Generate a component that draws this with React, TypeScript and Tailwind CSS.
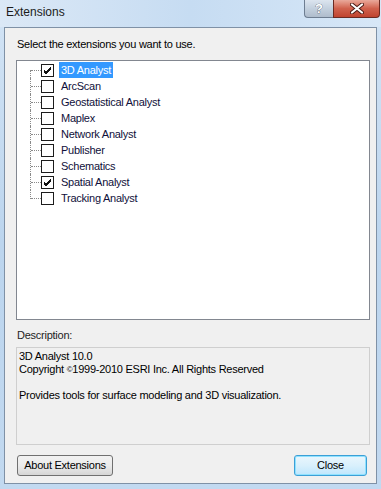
import React from 'react';

const ITEMS = [
  { name: '3D Analyst', checked: true, selected: true },
  { name: 'ArcScan', checked: false },
  { name: 'Geostatistical Analyst', checked: false },
  { name: 'Maplex', checked: false },
  { name: 'Network Analyst', checked: false },
  { name: 'Publisher', checked: false },
  { name: 'Schematics', checked: false },
  { name: 'Spatial Analyst', checked: true },
  { name: 'Tracking Analyst', checked: false },
];

function CheckBox({ checked }: { checked: boolean }) {
  return (
    <div className="w-[13px] h-[13px] border border-[#1c1c1c] bg-white shrink-0 flex items-center justify-center">
      {checked && (
        <svg width="11" height="11" viewBox="0 0 11 11">
          <path d="M2 5 L4 7 L9 2 M2 6 L4 8 L9 3 M2 7 L4 9 L9 4" stroke="#111" strokeWidth="1" fill="none" shapeRendering="crispEdges" />
        </svg>
      )}
    </div>
  );
}

function TreeRow({ item, index, last }: { item: (typeof ITEMS)[number]; index: number; last: boolean }) {
  return (
    <div className="h-[16px] flex items-center">
      {/* tree connector */}
      <div className="relative w-[24px] h-[16px] shrink-0">
        <span
          className={`absolute left-[13px] w-0 border-l border-dotted border-[#8a8a8a] ${
            index === 0 ? 'top-[8px] h-[8px]' : last ? 'top-0 h-[9px]' : 'top-0 h-[16px]'
          }`}
        />
        <span className="absolute left-[14px] top-[8px] w-[10px] h-0 border-t border-dotted border-[#8a8a8a]" />
      </div>
      <CheckBox checked={item.checked} />
      <span
        className={`ml-[5px] px-[2px] h-[16px] leading-[16px] text-[11px] tracking-[-0.25px] ${
          item.selected ? 'bg-[#3399ff] text-white' : 'text-[#10103a]'
        }`}
      >
        {item.name}
      </span>
    </div>
  );
}

export default function App() {
  return (
    <div className="w-[381px] h-[489px] flex flex-col bg-gradient-to-b from-[#d3e4f5] via-[#bcd5ee] to-[#c2d9f0] font-['Liberation_Sans',Arial,sans-serif] overflow-hidden">
      {/* Title bar */}
      <div className="h-[27px] flex items-start justify-between shrink-0 bg-gradient-to-r from-[#dbe8f6] via-[#c6dcf2] to-[#d7e7f7]">
        <div className="pl-[6px] pt-[5px] text-[12px] leading-[15px] text-[#1b1b1b]">Extensions</div>
        <div className="flex mr-[1px]">
          <div className="w-[29px] h-[18px] rounded-bl-[4px] border border-[#6d7d91] border-t-0 border-r-0 bg-gradient-to-b from-[#dce5ef] via-[#c3d0de] to-[#aebccc] flex items-center justify-center">
            <span className="text-[13px] font-bold leading-none text-white [-webkit-text-stroke:0.6px_#3a4656] [paint-order:stroke_fill]">?</span>
          </div>
          <div className="w-[47px] h-[18px] rounded-br-[4px] border border-[#6b2a22] border-t-0 bg-gradient-to-b from-[#e9a99b] via-[#d0614d] to-[#c0432f] flex items-center justify-center">
            <svg width="14" height="11" viewBox="0 0 14 11">
              <path d="M2 1.5 L12 9.5 M12 1.5 L2 9.5" stroke="#4a1a14" strokeWidth="4" strokeLinecap="round" />
              <path d="M2 1.5 L12 9.5 M12 1.5 L2 9.5" stroke="#ffffff" strokeWidth="2.2" strokeLinecap="round" />
            </svg>
          </div>
        </div>
      </div>

      {/* Client area */}
      <div className="mx-[4px] mb-[5px] flex-1 border border-[#7f91a6] bg-[#f0f0f0] flex flex-col pl-[11px] pr-[6px] text-[11px] tracking-[-0.25px]">
        <div className="pt-[9px] pl-[1px] leading-[14px] text-black">
          Select the extensions you want to use.
        </div>

        <div className="mt-[9px] h-[260px] border border-[#828790] bg-white pt-[1px] shrink-0">
          {ITEMS.map((item, i) => (
            <TreeRow key={item.name} item={item} index={i} last={i === ITEMS.length - 1} />
          ))}
        </div>

        <div className="mt-[8px] pl-[1px] leading-[14px] text-[#1e1e1e]">Description:</div>

        <div className="mt-[5px] h-[98px] border border-[#cfcfcf] bg-[#f0f0f0] pt-[2px] pl-[2px] leading-[13px] text-black shrink-0">
          <div>3D Analyst 10.0</div>
          <div>
            Copyright <span className="text-[8px] align-top">©</span>1999-2010 ESRI Inc. All Rights Reserved
          </div>
          <div>&nbsp;</div>
          <div>Provides tools for surface modeling and 3D visualization.</div>
        </div>

        <div className="mt-[10px] flex justify-between items-start">
          <button className="ml-[1px] w-[96px] h-[21px] rounded-[3px] border border-[#707070] bg-gradient-to-b from-[#f2f2f2] via-[#ebebeb] to-[#d6d6d6] text-black flex items-center justify-center">
            About Extensions
          </button>
          <button className="mr-[3px] w-[73px] h-[21px] rounded-[3px] border border-[#3c9fd6] shadow-[inset_0_0_0_1px_#8fe2ff] bg-gradient-to-b from-[#eaf6fd] via-[#d9f0fc] to-[#bee6fd] text-black flex items-center justify-center">
            Close
          </button>
        </div>
      </div>
    </div>
  );
}
